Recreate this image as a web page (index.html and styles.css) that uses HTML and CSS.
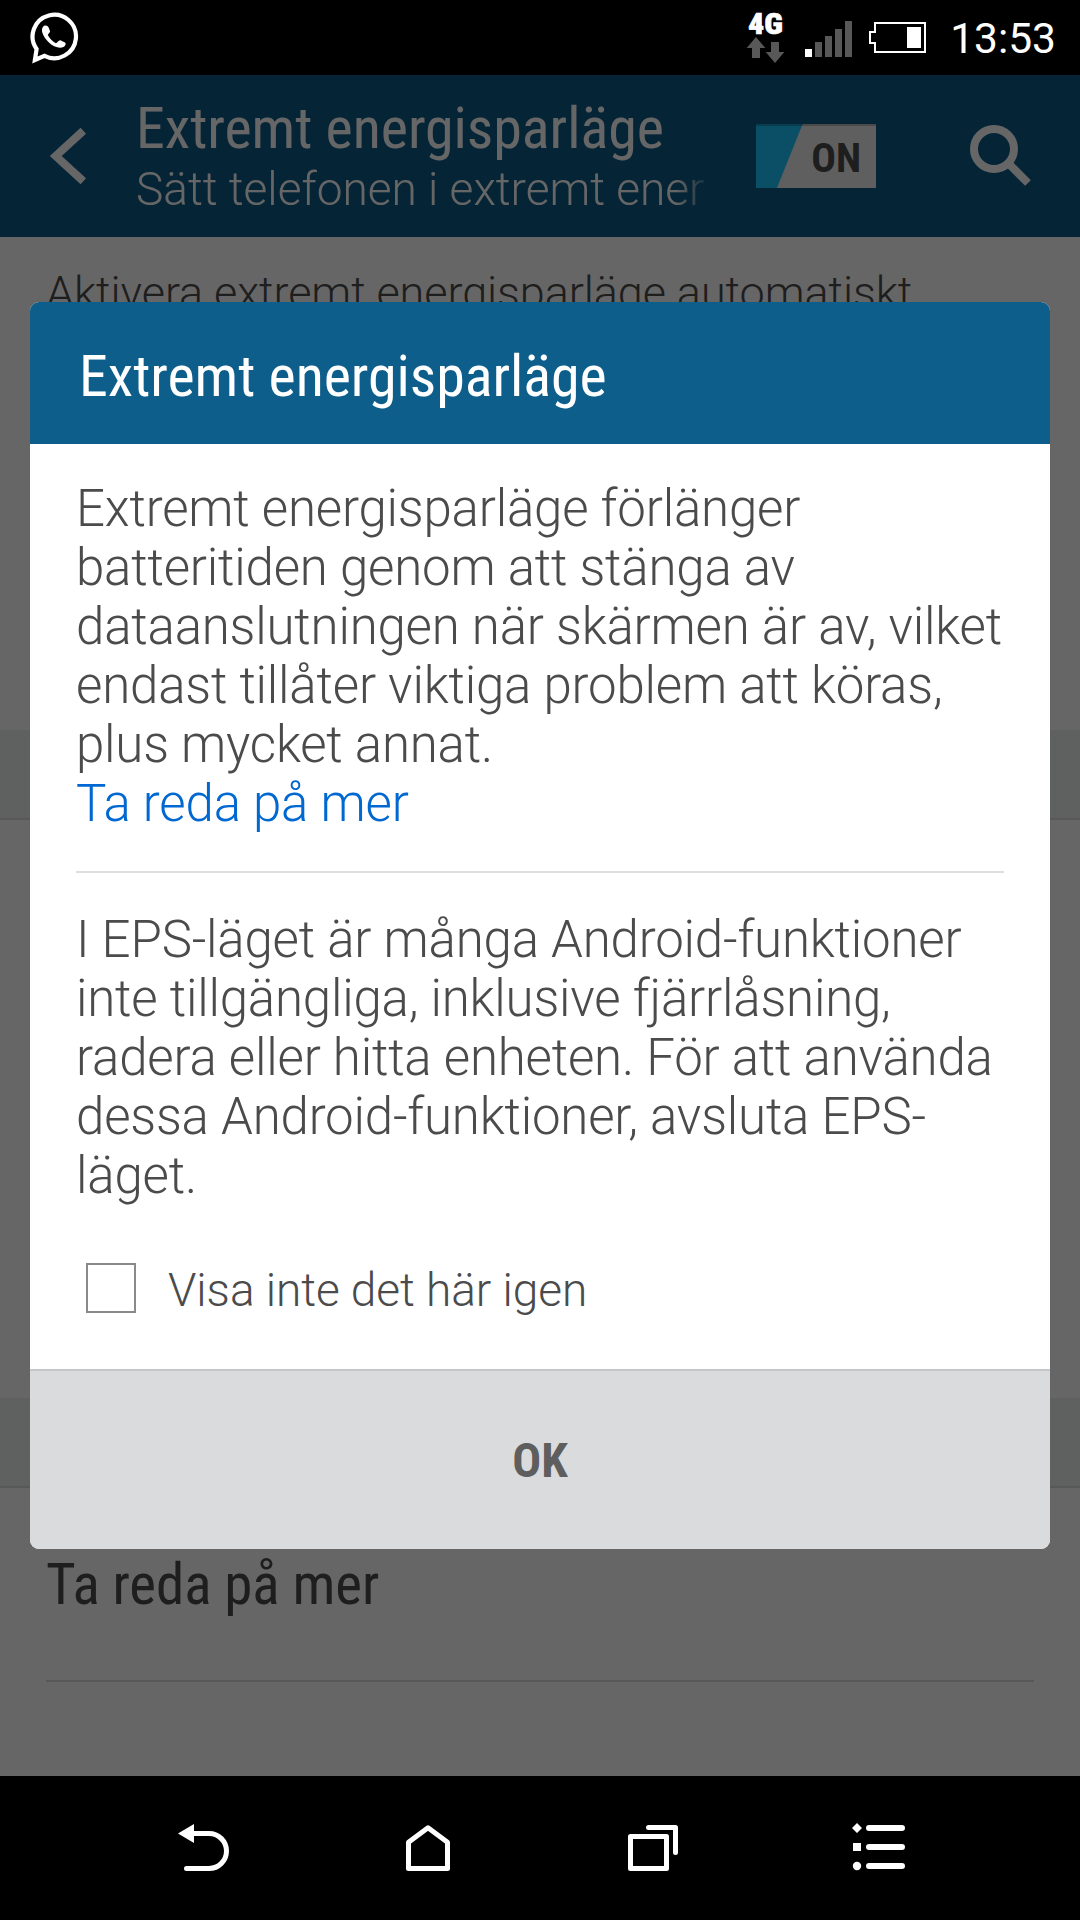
FILE: index.html
```html
<!DOCTYPE html>
<html lang="sv">
<head>
<meta charset="utf-8">
<title>Extremt energisparläge</title>
<link rel="stylesheet" href="styles.css">
</head>
<body>
<div class="screen">
  <header class="status-bar">
    <svg class="icon-chat" width="52" height="75" viewBox="28 0 52 75">
      <path d="M36.6 49A21.7 21.7 0 1 1 44.5 55.8L34.9 60Z" fill="none" stroke="#fff" stroke-width="4.2"/>
      <path d="M43.8 26C45.5 25 48 25.8 48.6 27.6L50 31C50.4 32.6 48.2 33.6 47.8 35C49.5 38.4 52.6 41.4 56 43.2C57.6 42.6 58.6 39.8 60.4 40.2L65 42.4C66.6 43.8 65 46 63.4 47C59.6 49 53 46.8 48.4 42C43.6 37.2 39.4 29.6 43.8 26Z" fill="#fff"/>
    </svg>
    <div class="status-right">
      <svg class="icon-network" width="40" height="75" viewBox="746 0 40 75">
        <text class="network-label" x="748" y="34" textLength="35" lengthAdjust="spacingAndGlyphs">4G</text>
        <path d="M756 37L765.300 48H760V58H752V48H746.700Z" fill="#585858"/>
        <path d="M775 63L784.300 52H779V42H771V52H765.700Z" fill="#585858"/>
      </svg>
      <svg class="icon-signal" width="47" height="75" viewBox="805 0 47 75">
        <path d="M805 49h7v8h-7z" fill="#fff"/>
        <path d="M815 42h7v15h-7zM825 36h7v21h-7zM835 29h7v28h-7zM845 21h7v36h-7z" fill="#585858"/>
      </svg>
      <svg class="icon-battery" width="57" height="75" viewBox="869 0 57 75">
        <path d="M875 23H925V52H875V43H870V32H875Z" fill="none" stroke="#fff" stroke-width="2"/>
        <path d="M907 27h14v21h-14z" fill="#fff"/>
      </svg>
      <span class="clock">13:53</span>
    </div>
  </header>

  <main class="app">
    <div class="action-bar">
      <svg class="icon-back" width="40" height="60" viewBox="48 126 40 60">
        <path d="M83.300 130.700L55.700 156L83.300 181.300" fill="none" stroke="#fff" stroke-width="8"/>
      </svg>
      <div class="heading">
        <h1 class="heading-title">Extremt energisparläge</h1>
        <p class="heading-sub">Sätt telefonen i extremt ener</p>
      </div>
      <div class="switch"><span class="switch-label">ON</span></div>
      <svg class="icon-search" width="64" height="64" viewBox="968 123 64 64">
        <circle cx="994" cy="149" r="20" fill="none" stroke="#fff" stroke-width="8"/>
        <path d="M1008.500 163.500L1028 183" stroke="#fff" stroke-width="8"/>
      </svg>
    </div>
    <section class="group group-auto"><p class="summary">Aktivera extremt energisparläge automatiskt</p></section>
    <div class="band"></div>
    <section class="group group-apps"></section>
    <div class="band"></div>
    <section class="group group-more"><p class="item">Ta reda på mer</p></section>

    <div class="scrim">
      <div class="dialog">
        <h2 class="dialog-title">Extremt energisparläge</h2>
        <div class="dialog-body">
          <p class="text">Extremt energisparläge förlänger<br>batteritiden genom att stänga av<br>dataanslutningen när skärmen är av, vilket<br>endast tillåter viktiga problem att köras,<br>plus mycket annat.<br><a class="link">Ta reda på mer</a></p>
          <div class="rule"></div>
          <p class="text">I EPS-läget är många Android-funktioner<br>inte tillgängliga, inklusive fjärrlåsning,<br>radera eller hitta enheten. För att använda<br>dessa Android-funktioner, avsluta EPS-<br>läget.</p>
          <label class="check-row"><span class="checkbox"></span><span class="check-label">Visa inte det här igen</span></label>
        </div>
        <button class="ok">OK</button>
      </div>
    </div>
  </main>

  <nav class="nav-bar">
    <svg width="60" height="60" viewBox="174 1818 60 60">
      <path d="M192 1833.500H209A17.500 17.500 0 0 1 209 1868.500H186.500" fill="none" stroke="#fff" stroke-width="5" stroke-linecap="round"/>
      <path d="M178 1833.500L194 1824V1843Z" fill="#fff"/>
    </svg>
    <svg width="60" height="60" viewBox="399 1818 60 60">
      <path d="M408.500 1868.500V1842.200L428 1827.800L447.500 1842.200V1868.500Z" fill="none" stroke="#fff" stroke-width="5" stroke-linejoin="round"/>
    </svg>
    <svg width="60" height="60" viewBox="624 1818 60 60">
      <path d="M630.500 1836.500H666.500V1868.500H630.500ZM648.500 1827.500H675.500V1852.500" fill="none" stroke="#fff" stroke-width="5" stroke-linejoin="round" stroke-linecap="round"/>
    </svg>
    <svg width="60" height="60" viewBox="849 1818 60 60">
      <path d="M869 1828H902M869 1847H902M869 1866H902" stroke="#fff" stroke-width="6" stroke-linecap="round"/>
      <path d="M857 1823L862 1828L857 1833L852 1828ZM853 1843h8v8h-8z" fill="#fff"/>
      <circle cx="857" cy="1866" r="4.200" fill="#fff"/>
    </svg>
  </nav>
</div>
</body>
</html>
```
FILE: styles.css
```css
* { box-sizing: border-box; margin: 0; padding: 0; }

body {
  background: #000;
  font-family: Roboto, "Noto Sans", sans-serif;
}

svg { display: block; flex: none; }

.screen {
  display: flex;
  flex-direction: column;
  width: 1080px;
  height: 1920px;
  overflow: hidden;
}

/* Status bar */
.status-bar {
  display: flex;
  justify-content: space-between;
  align-items: center;
  height: 75px;
  padding: 0 24px 0 28px;
  background: #000;
}
.status-right { display: flex; align-items: center; }
.network-label {
  font-family: "Roboto Condensed", Roboto, sans-serif;
  font-weight: 900;
  font-size: 29.5px;
  fill: #fff;
  stroke: #fff;
  stroke-width: 0.6px;
}
.icon-signal { margin-left: 19px; }
.icon-battery { margin-left: 17px; }
.clock {
  margin-left: 24px;
  padding-top: 3px;
  font-size: 42.5px;
  line-height: 50px;
  color: #fff;
}

/* Settings page */
.app {
  position: relative;
  display: flex;
  flex-direction: column;
  height: 1701px;
  background: #fff;
}
.action-bar {
  display: flex;
  height: 162px;
  padding: 0 48px;
  background: #0d5e8b;
  color: #fff;
}
.icon-back { margin-top: 51px; }
.heading {
  width: 574px;
  margin-left: 48px;
  padding-top: 20px;
}
.heading-title {
  font-family: "Roboto Condensed", Roboto, sans-serif;
  font-weight: 400;
  font-size: 58px;
  line-height: 66px;
  letter-spacing: -0.04px;
}
.heading-sub {
  margin-top: 1px;
  font-weight: 300;
  font-size: 46px;
  line-height: 54px;
  white-space: nowrap;
  -webkit-mask-image: linear-gradient(to right, #000 540px, transparent 576px);
  mask-image: linear-gradient(to right, #000 540px, transparent 576px);
}
.switch {
  display: flex;
  align-items: center;
  justify-content: flex-end;
  width: 120px;
  height: 64px;
  margin: 49px 0 0 46px;
  padding: 2px 15px 0 0;
  border-top: 2px solid rgba(0, 0, 0, 0.22);
  background: linear-gradient(111.900deg, #1ac6fc 42.800px, #eee 43.800px) border-box;
}
.switch-label {
  font-family: "Roboto Condensed", Roboto, sans-serif;
  font-weight: 700;
  font-size: 41px;
  line-height: 48px;
  color: #4b4b4b;
}
.icon-search { margin: 48px 0 0 92px; }

.group-auto { height: 493px; padding: 29px 46px 0; }
.summary {
  font-weight: 300;
  font-size: 45px;
  line-height: 54px;
  letter-spacing: -0.08px;
  color: #4b4b4b;
}
.band {
  height: 90px;
  background: #ebf3ef;
  border-bottom: 2px solid #dcdcdc;
}
.group-apps { height: 578px; }
.group-more { padding: 0 46px; }
.item {
  height: 194px;
  padding-top: 64px;
  border-bottom: 2px solid #dcdcdc;
  font-family: "Roboto Condensed", Roboto, sans-serif;
  font-size: 57px;
  line-height: 66px;
  letter-spacing: -0.1px;
  color: #4b4b4b;
}

/* Dialog */
.scrim {
  position: absolute;
  inset: 0;
  display: flex;
  align-items: center;
  justify-content: center;
  background: rgba(0, 0, 0, 0.6);
}
.dialog {
  width: 1020px;
  height: 1247px;
  border-radius: 9px;
  overflow: hidden;
  background: #fff;
}
.dialog-title {
  height: 142px;
  padding: 40px 49px 0;
  background: #0d5e8b;
  font-family: "Roboto Condensed", Roboto, sans-serif;
  font-weight: 400;
  font-size: 58px;
  line-height: 68px;
  letter-spacing: -0.05px;
  color: #fff;
}
.dialog-body {
  height: 925px;
  padding: 35px 46px 0;
  color: #4b4b4b;
}
.text {
  font-weight: 300;
  font-size: 51px;
  line-height: 59px;
  letter-spacing: -0.2px;
  white-space: nowrap;
}
.link { color: #0068d0; }
.rule {
  height: 2px;
  margin: 38px 0 37px;
  background: #dedede;
}
.check-row {
  display: flex;
  margin: 58px 0 0 10px;
}
.checkbox {
  width: 50px;
  height: 50px;
  border: 2px solid #8a8a8a;
}
.check-label {
  margin-left: 32px;
  font-weight: 300;
  font-size: 46px;
  line-height: 54px;
  letter-spacing: -0.05px;
}
.ok {
  display: block;
  width: 100%;
  height: 180px;
  padding-top: 2px;
  border: 0;
  border-top: 2px solid #c5c6c8;
  background: #dadbdd;
  font-family: "Roboto Condensed", Roboto, sans-serif;
  font-weight: 700;
  font-size: 48px;
  line-height: 56px;
  color: #5e5e5e;
}

/* Navigation bar */
.nav-bar {
  display: grid;
  grid-template-columns: repeat(4, 225px);
  justify-items: center;
  height: 144px;
  padding: 42px 89px 0 91px;
  background: #000;
}
```
